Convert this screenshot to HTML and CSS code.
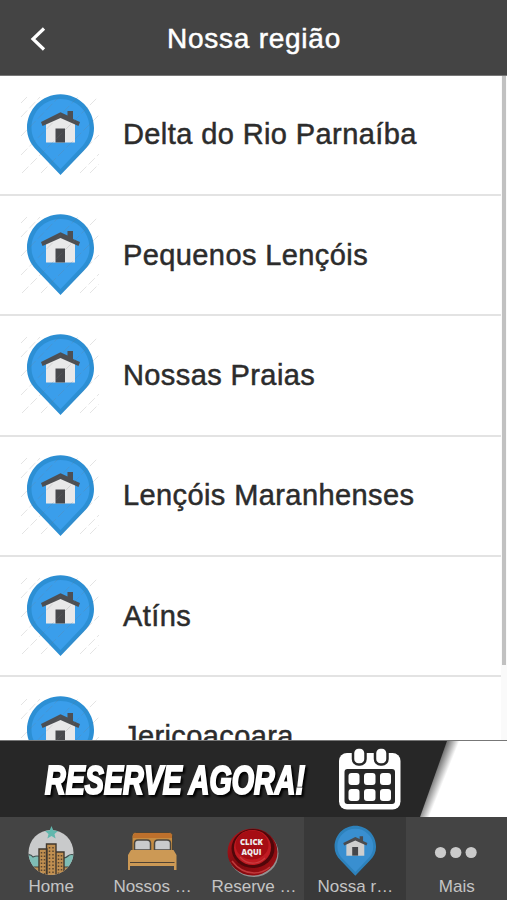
FILE: index.html
```
<!DOCTYPE html>
<html lang="pt-BR">
<head>
    <meta charset="UTF-8">
    <meta name="viewport" content="width=device-width, initial-scale=1.0">
    <title>Nossa região</title>
    <link rel="stylesheet" href="styles.css">
</head>
<body>
    <svg class="defs" aria-hidden="true">
        <symbol id="pin" viewBox="0 0 80 84">
            <path fill="#2c8fd4" d="M40.5 1.2C59 1.2 74 16.2 74 35C74 44 70.5 51 64 57.5L40.5 82L17 57.5C10.5 51 7 44 7 35C7 16.2 22 1.2 40.5 1.2Z"/>
            <path fill="#3a9eeb" d="M40.5 6C56.5 6 69.5 18.5 69.5 35C69.5 43 66 49.5 60.5 55L40.5 76L20.5 55C15 49.5 11.5 43 11.5 35C11.5 18.5 24.5 6 40.5 6Z"/>
            <path fill="#e8e8e9" d="M26 30L40.5 22L55 30V49.5H26Z"/>
            <path fill="#4d4f53" d="M47.5 18H53V26L60 29L58.5 33L40.5 25L22.5 33L21 29L40.5 19.2L47.5 22.5Z"/>
            <path fill="#48494d" d="M35.5 35.5H45V49.5H35.5Z"/>
        </symbol>
        <symbol id="pin-lines" viewBox="0 0 80 84">
            <path fill="none" stroke="#777" stroke-opacity=".25" stroke-width=".8" stroke-dasharray="9 3" d="M1 10L7 4M1 24L20 4M1 43L39 4M1 62L58 4M2 80L78 4M21 80L79 22M40 80L79 42M60 80L79 61M70 80L79 71"/>
        </symbol>
    </svg>

    <header class="topbar">
        <svg class="back" viewBox="0 0 16 24"><path d="M14 1.5L3 12L14 22.5"/></svg>
        <h1>Nossa região</h1>
    </header>

    <main class="content">
        <ul class="list">
            <li><svg class="pin"><use href="#pin"/><use href="#pin-lines"/></svg><span>Delta do Rio Parnaíba</span></li>
            <li><svg class="pin"><use href="#pin"/><use href="#pin-lines"/></svg><span>Pequenos Lençóis</span></li>
            <li><svg class="pin"><use href="#pin"/><use href="#pin-lines"/></svg><span>Nossas Praias</span></li>
            <li><svg class="pin"><use href="#pin"/><use href="#pin-lines"/></svg><span>Lençóis Maranhenses</span></li>
            <li><svg class="pin"><use href="#pin"/><use href="#pin-lines"/></svg><span>Atíns</span></li>
            <li><svg class="pin"><use href="#pin"/><use href="#pin-lines"/></svg><span>Jericoacoara</span></li>
        </ul>
        <div class="scrollbar"><div class="thumb"></div></div>
    </main>

    <svg class="banner" viewBox="0 0 507 76">
        <defs>
            <linearGradient id="edge" gradientUnits="userSpaceOnUse" x1="432" y1="40" x2="442" y2="44">
                <stop offset="0" stop-color="#777"/>
                <stop offset="1" stop-color="#fff"/>
            </linearGradient>
        </defs>
        <rect width="507" height="76" fill="#fff"/>
        <path fill="url(#edge)" d="M440 0H465L434 76H410Z"/>
        <path fill="#272727" d="M0 0H447L420 76H0Z"/>
        <text class="banner-text" x="45" y="52.5" textLength="260" lengthAdjust="spacingAndGlyphs">RESERVE AGORA!</text>
        <rect x="339" y="12" width="61.5" height="56.5" rx="8" fill="#fff"/>
        <rect x="344.5" y="28" width="50.5" height="35" rx="3" fill="#272727"/>
        <g fill="#fff" stroke="#272727" stroke-width="2.5">
            <rect x="353" y="6.5" width="12.5" height="17" rx="5.5"/>
            <rect x="375" y="6.5" width="12.5" height="17" rx="5.5"/>
        </g>
        <g fill="#fff">
            <rect x="348.5" y="32" width="11" height="12" rx="3"/>
            <rect x="364" y="32" width="11.5" height="12" rx="3"/>
            <rect x="380" y="32" width="11" height="12" rx="3"/>
            <rect x="348.5" y="48" width="11" height="12" rx="3"/>
            <rect x="364" y="48" width="11.5" height="12" rx="3"/>
            <rect x="380" y="48" width="11" height="12" rx="3"/>
        </g>
    </svg>

    <nav class="tabs">
        <a class="tab">
            <svg viewBox="0 0 52 52">
                <defs><clipPath id="round"><circle cx="26" cy="27.5" r="22.5"/></clipPath></defs>
                <g clip-path="url(#round)">
                    <rect width="52" height="52" fill="#c9cacb"/>
                    <path fill="#7fbdb5" stroke="#41504f" stroke-width="1.2" d="M0 31Q5 28 8 32Q12 30 16 32V44H0ZM36 32Q40 34 43 31Q46 28 52 31V44H36Z"/>
                    <path fill="#bd9055" stroke="#4a4034" stroke-width="1.2" d="M2 42H15V52H2ZM37 42H50V52H37Z"/>
                    <path fill="#c08f50" stroke="#40382f" stroke-width="1.4" d="M14 24H22V52H14ZM31 27H39V52H31ZM21.5 19H31V52H21.5Z"/>
                    <path fill="none" stroke="#594631" stroke-width="1.5" stroke-dasharray="1.5 2" d="M16.5 27V50M19.5 27V50M24.5 22V50M28 22V50M33.5 30V50M36.5 30V50"/>
                </g>
                <path fill="#62b7ad" d="M26.5 1L28.4 5.6L33 6L29.5 9L30.6 13.5L26.5 11L22.4 13.5L23.5 9L20 6L24.6 5.6Z"/>
            </svg>
            <span>Home</span>
        </a>
        <a class="tab">
            <svg viewBox="0 0 52 52">
                <path fill="#c58c42" stroke="#4b4336" stroke-width="1" d="M6 26V11Q6 7.5 9.5 7.5H43Q46.5 7.5 46.5 11V26Z"/>
                <path fill="#bd702c" d="M7 13V11Q7 8 10 8H43Q46 8 46 11V13Z"/>
                <path fill="#c9cbcd" stroke="#4b4740" stroke-width="1.5" d="M8.5 25V18.5Q8.5 15 12 15H21Q24.5 15 24.5 18.5V25ZM28.5 25V18.5Q28.5 15 32 15H41Q44.5 15 44.5 18.5V25Z"/>
                <path fill="#cc9955" d="M5 25H47.5L50.5 30V45H48V41H4V45H2V30Z"/>
                <path stroke="#514434" stroke-width="1.2" d="M4 37.5H48.5"/>
            </svg>
            <span>Nossos …</span>
        </a>
        <a class="tab">
            <svg viewBox="0 0 52 52">
                <defs>
                    <linearGradient id="red" x1="0" y1="0" x2="1" y2="1">
                        <stop offset="0" stop-color="#b51a20"/>
                        <stop offset=".5" stop-color="#7c080d"/>
                        <stop offset="1" stop-color="#a91318"/>
                    </linearGradient>
                </defs>
                <ellipse cx="26.5" cy="28.5" rx="25" ry="23.5" fill="#929292"/>
                <ellipse cx="25.5" cy="27" rx="25" ry="23.5" fill="url(#red)"/>
                <path fill="none" stroke="#c03a3c" stroke-width="1.5" d="M5 36Q14 48 27 48Q36 48 43 42"/>
                <ellipse cx="26" cy="23.5" rx="21.5" ry="19.5" fill="#50070a"/>
                <ellipse cx="25.5" cy="22.5" rx="18.5" ry="17.5" fill="#c01b22"/>
                <ellipse cx="25" cy="20" rx="16.5" ry="14.5" fill="#a60d14"/>
                <path fill="none" stroke="#c93c40" stroke-width="1.2" d="M13 32Q19 39 28 38Q34 37 38 33"/>
                <text class="click" x="24.500" y="19.5" textLength="23" lengthAdjust="spacingAndGlyphs">CLICK</text>
                <text class="click" x="24.500" y="29.5" textLength="20" lengthAdjust="spacingAndGlyphs">AQUI</text>
            </svg>
            <span>Reserve …</span>
        </a>
        <a class="tab active">
            <svg class="tab-pin"><use href="#pin"/></svg>
            <span>Nossa r…</span>
        </a>
        <a class="tab">
            <svg viewBox="0 0 52 52">
                <g fill="#cbcbcb">
                    <circle cx="10.500" cy="27.5" r="5.6"/>
                    <circle cx="25.8" cy="27.5" r="5.6"/>
                    <circle cx="41.1" cy="27.5" r="5.6"/>
                </g>
            </svg>
            <span>Mais</span>
        </a>
    </nav>
</body>
</html>
```
FILE: styles.css
```
* {
    box-sizing: border-box;
}
body {
    font-family: "Liberation Sans", Arial, sans-serif;
    background-color: #fff;
    margin: 0;
    height: 900px;
    display: flex;
    flex-direction: column;
    overflow: hidden;
}
.defs {
    position: absolute;
    width: 0;
    height: 0;
}
.topbar {
    flex: none;
    display: grid;
    grid-template-columns: 60px 1fr 60px;
    align-items: center;
    height: 75.5px;
    padding-top: 3px;
    background-color: #444;
    color: #fff;
    border-bottom: 1px solid #777;
}
.back {
    width: 16px;
    height: 24px;
    margin-left: 30px;
    fill: none;
    stroke: #fff;
    stroke-width: 3.2;
}
h1 {
    margin: 0;
    padding-left: 1px;
    text-align: center;
    font-size: 28px;
    font-weight: normal;
    letter-spacing: 0.75px;
    -webkit-text-stroke: 0.5px #fff;
}
.content {
    flex: 1;
    min-height: 0;
    display: flex;
    overflow: hidden;
}
.list {
    flex: 1;
    margin: 0;
    padding: 0;
    list-style: none;
}
.list li {
    display: flex;
    align-items: center;
    height: 120.4px;
    padding-left: 20px;
    border-bottom: 2px solid #e3e3e3;
    color: #2c2c2c;
    font-size: 29px;
    letter-spacing: 0.4px;
    -webkit-text-stroke: 0.5px #2c2c2c;
}
.pin {
    width: 80px;
    height: 84px;
    margin-right: 23px;
}
.scrollbar {
    width: 6px;
    background-color: #fafafa;
}
.thumb {
    width: 4px;
    height: 589px;
    margin-left: 1px;
    background-color: #c1c1c1;
}
.banner {
    flex: none;
    width: 507px;
    height: 77px;
    border-top: 1px solid #777;
}
.banner-text {
    font-family: "Liberation Sans", Arial, sans-serif;
    font-size: 40px;
    font-weight: bold;
    font-style: italic;
    fill: #fff;
    stroke: #fff;
    stroke-width: 2.2px;
    filter: drop-shadow(2px 2px 1px #000);
}
.tabs {
    flex: none;
    display: grid;
    grid-template-columns: repeat(5, 1fr);
    height: 83px;
    background-color: #444;
}
.tab {
    display: flex;
    flex-direction: column;
    align-items: center;
    padding-top: 8px;
    color: #c4c4c4;
    font-size: 17px;
    line-height: 20px;
    letter-spacing: 0;
    white-space: nowrap;
}
.tab span {
    padding-left: 1px;
}
.tab svg {
    width: 52px;
    height: 52px;
}
.tab.active {
    background-color: #393939;
}
.tab .tab-pin {
    opacity: 0.85;
}
.click {
    font-family: "Open Sans", "Liberation Sans", sans-serif;
    font-size: 9px;
    font-weight: 800;
    letter-spacing: 0;
    text-anchor: middle;
    fill: #eee;
}
```
